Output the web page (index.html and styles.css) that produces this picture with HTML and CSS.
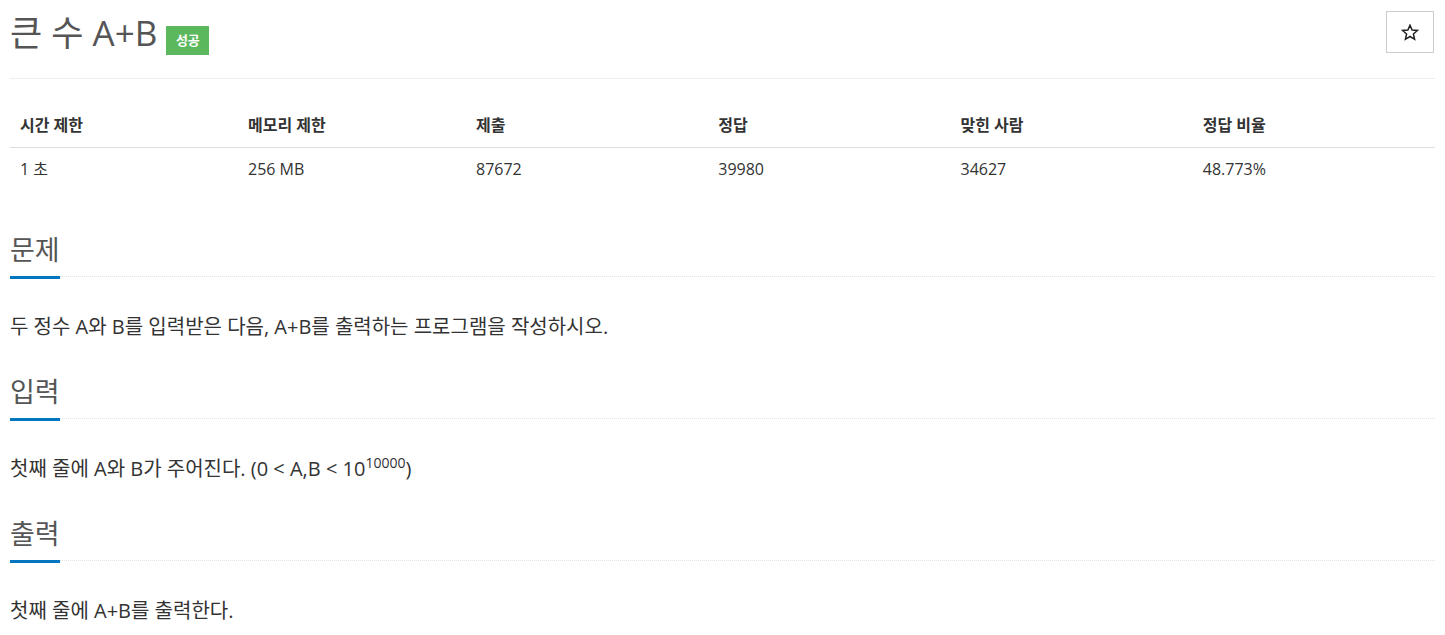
FILE: index.html
```html
<!DOCTYPE html>
<html lang="ko">
<head>
<meta charset="utf-8">
<title>큰 수 A+B</title>
<link rel="stylesheet" href="styles.css">
</head>
<body>
<div class="container">
  <div class="page-header">
    <h1 class="title"><span class="title-text">큰 수 A+B</span><span class="badge">성공</span></h1>
    <button class="star-btn" type="button" aria-label="즐겨찾기">
      <svg width="18" height="17" viewBox="0 0 18 17"><path d="M9 1.2 L11.1 6.1 L16.4 6.5 L12.4 10 L13.6 15.3 L9 12.5 L4.4 15.3 L5.6 10 L1.6 6.5 L6.9 6.1 Z" fill="none" stroke="#222" stroke-width="1.5" stroke-linejoin="miter"/></svg>
    </button>
  </div>

  <table class="info">
    <thead>
      <tr>
        <th class="w16">시간 제한</th>
        <th class="w16">메모리 제한</th>
        <th class="w17">제출</th>
        <th class="w17">정답</th>
        <th class="w17">맞힌 사람</th>
        <th class="w17">정답 비율</th>
      </tr>
    </thead>
    <tbody>
      <tr>
        <td>1 초</td>
        <td>256 MB</td>
        <td>87672</td>
        <td>39980</td>
        <td>34627</td>
        <td>48.773%</td>
      </tr>
    </tbody>
  </table>

  <section class="problem-section">
    <div class="headline"><h2>문제</h2></div>
    <p class="problem-text">두 정수 A와 B를 입력받은 다음, A+B를 출력하는 프로그램을 작성하시오.</p>
  </section>

  <section class="problem-section">
    <div class="headline"><h2>입력</h2></div>
    <p class="problem-text">첫째 줄에 A와 B가 주어진다. (0 &lt; A,B &lt; 10<sup>10000</sup>)</p>
  </section>

  <section class="problem-section">
    <div class="headline"><h2>출력</h2></div>
    <p class="problem-text">첫째 줄에 A+B를 출력한다.</p>
  </section>
</div>
</body>
</html>
```

FILE: styles.css
```css
* { box-sizing: border-box; }
html, body {
  margin: 0;
  padding: 0;
  background: #fff;
}
body {
  font-family: "Open Sans", "Noto Sans CJK KR", sans-serif;
  color: #333;
  font-size: 16px;
  line-height: 22px;
}
.container {
  padding: 0 10px;
}
.page-header {
  display: flex;
  justify-content: space-between;
  align-items: flex-start;
  border-bottom: 1px solid #eee;
  padding-top: 8px;
  height: 79px;
}
.title {
  margin: 0;
  display: flex;
  align-items: flex-start;
  font-weight: 400;
  font-size: 35px;
  line-height: 50px;
  color: #555;
}
.badge {
  display: inline-flex;
  align-items: center;
  justify-content: center;
  margin-left: 9px;
  margin-top: 18px;
  width: 43px;
  height: 29px;
  background: #5cb85c;
  color: #fff;
  font-size: 13px;
  font-weight: 700;
  line-height: 1;
}
.star-btn {
  width: 48px;
  height: 42px;
  margin-top: 3px;
  margin-right: 1px;
  background: #fff;
  border: 1px solid #ccc;
  border-radius: 0;
  display: flex;
  align-items: center;
  justify-content: center;
  padding: 0;
}
.info {
  width: 100%;
  border-collapse: collapse;
  margin-top: 26px;
}
.info th, .info td {
  text-align: left;
  padding: 0 10px;
  line-height: 22px;
  font-size: 16px;
}
.info th {
  font-weight: 700;
  border-bottom: 1px solid #ddd;
  padding-top: 9px;
  padding-bottom: 11px;
}
.info td {
  padding-top: 10px;
  padding-bottom: 10px;
}
.w16 { width: 16%; }
.w17 { width: 17%; }
.info + .problem-section {
  margin-top: 40px;
}
.headline {
  border-bottom: 1px dotted #dfe3e8;
  height: 47px;
  display: flex;
  align-items: flex-end;
}
.headline h2 {
  margin: 0 0 -3px 0;
  font-size: 27px;
  font-weight: 400;
  line-height: 40px;
  color: #555;
  border-bottom: 3px solid #0076c0;
  padding-bottom: 6px;
}
.problem-text {
  margin: 35px 0 30px 0;
  font-size: 20px;
  line-height: 30px;
  color: #333;
}
.problem-text sup {
  font-size: 14px;
  line-height: 0;
  vertical-align: 8px;
}
```
